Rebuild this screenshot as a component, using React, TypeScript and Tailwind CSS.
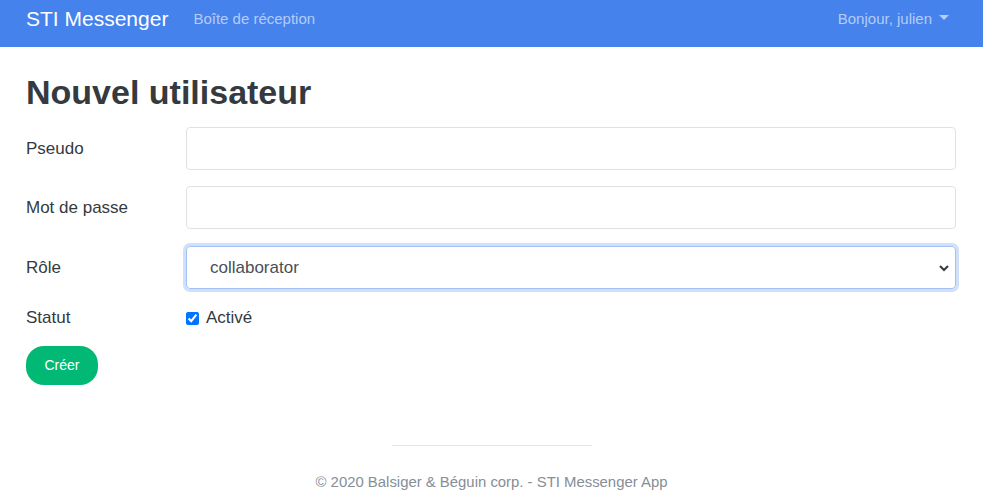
import React from "react";

export default function App() {
  return (
    <div className="min-h-[503px] bg-white" style={{ fontFamily: '"Liberation Sans", Arial, sans-serif' }}>
      <nav className="h-[47px] bg-[#4582ec] flex items-center pl-[26px] pr-[26px] pb-[11px]">
        <span className="text-[21px] text-white leading-none mr-[25px]">STI Messenger</span>
        <span className="text-[15px] text-white/60 leading-none">Boîte de réception</span>
        <div className="ml-auto flex items-center text-[15px] text-white/60 leading-none mr-[8px]">
          <span>Bonjour, julien</span>
          <svg width="10" height="6" viewBox="0 0 10 6" className="ml-[7px]">
            <path d="M0 0 L10 0 L5 5 Z" fill="currentColor" />
          </svg>
        </div>
      </nav>
      <main className="pl-[26px] pr-[27px]">
        <h1 className="mt-[25px] mb-[14px] text-[34px] leading-[41px] font-bold text-[#343a40]">Nouvel utilisateur</h1>
        <div className="flex items-center mb-[16px]">
          <label className="w-[160px] text-[17px] text-[#343a40]">Pseudo</label>
          <input className="flex-1 h-[43px] border border-[#dee2e6] rounded-[4px] px-3 text-[17px] outline-none" />
        </div>
        <div className="flex items-center mb-[17px]">
          <label className="w-[160px] text-[17px] text-[#343a40]">Mot de passe</label>
          <input type="password" className="flex-1 h-[43px] border border-[#dee2e6] rounded-[4px] px-3 text-[17px] outline-none" />
        </div>
        <div className="flex items-center mb-[17px]">
          <label className="w-[160px] text-[17px] text-[#343a40]">Rôle</label>
          <div className="flex-1 relative h-[43px] border border-[#a2c1f5] rounded-[4px] shadow-[0_0_0_3px_rgba(69,130,236,0.25)] flex items-center pl-[23px] text-[17px] text-[#495057]">
            <span>collaborator</span>
            <svg width="10" height="7" viewBox="0 0 10 7" className="absolute right-[6px] top-[18px]">
              <path d="M1 1 L5 5 L9 1" fill="none" stroke="#343a40" strokeWidth="2" />
            </svg>
          </div>
        </div>
        <div className="flex items-center h-[24px] mb-[16px]">
          <label className="w-[160px] text-[17px] text-[#343a40]">Statut</label>
          <label className="flex items-center text-[17px] text-[#343a40]">
            <input type="checkbox" defaultChecked className="w-[13px] h-[13px] m-0 mr-[7px]" />
            Activé
          </label>
        </div>
        <button className="h-[39px] w-[72px] rounded-[18px] bg-[#02b875] text-white text-[14px]">Créer</button>
      </main>
      <footer className="mt-[60px] flex flex-col items-center">
        <div className="w-[200px] border-t border-[#e5e5e5]"></div>
        <p className="mt-[25px] text-[14.9px] text-[#868e96]">© 2020 Balsiger &amp; Béguin corp. - STI Messenger App</p>
      </footer>
    </div>
  );
}
